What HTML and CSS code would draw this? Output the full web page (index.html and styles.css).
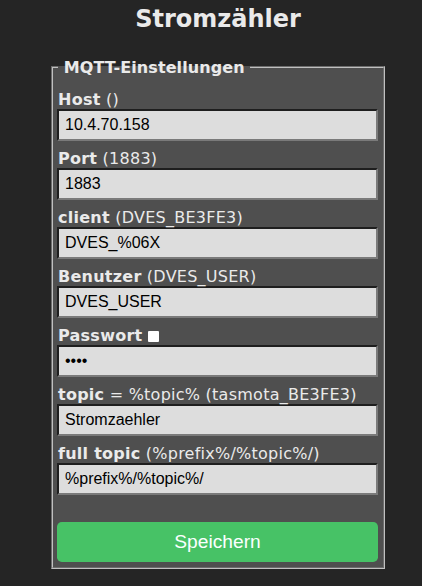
FILE: index.html
```html
<!DOCTYPE html>
<html lang="de">
<head>
<meta charset="utf-8">
<title>Stromzähler</title>
<link rel="stylesheet" href="styles.css">
</head>
<body>
<div class="page">
  <h2 class="title">Stromzähler</h2>
  <fieldset class="box">
    <legend class="legend">&nbsp;MQTT-Einstellungen&nbsp;</legend>
    <p class="field"><b>Host</b> ()<br><input class="inp" type="text" value="10.4.70.158"></p>
    <p class="field"><b>Port</b> (1883)<br><input class="inp" type="text" value="1883"></p>
    <p class="field"><b>client</b> (DVES_BE3FE3)<br><input class="inp" type="text" value="DVES_%06X"></p>
    <p class="field"><b>Benutzer</b> (DVES_USER)<br><input class="inp" type="text" value="DVES_USER"></p>
    <p class="field"><b>Passwort</b> <span class="check"></span><br><input class="inp" type="password" value="1234"></p>
    <p class="field"><b>topic</b> = %topic% (tasmota_BE3FE3)<br><input class="inp" type="text" value="Stromzaehler"></p>
    <p class="field"><b>full topic</b> (%prefix%/%topic%/)<br><input class="inp" type="text" value="%prefix%/%topic%/"></p>
    <button class="save" type="button">Speichern</button>
  </fieldset>
</div>
</body>
</html>
```
FILE: styles.css
```css
html, body {
  margin: 0;
  padding: 0;
  background: #252525;
}
body {
  font-family: "DejaVu Sans", Verdana, sans-serif;
  color: #eaeaea;
}
.page {
  width: 334px;
  margin-left: 51px;
}
.title {
  margin: 5px 0 0 0;
  font-size: 24px;
  line-height: 29px;
  font-weight: bold;
  text-align: center;
  color: #eaeaea;
}
.box {
  box-sizing: border-box;
  width: 334px;
  margin: 23.5px 0 0 0;
  padding: 5px 5px 5px 5px;
  border: 2px groove #c0c0c0;
  background: #4f4f4f;
  min-width: 0;
}
.legend {
  padding: 0;
  font-size: 16px;
  line-height: 19px;
  font-weight: bold;
  letter-spacing: 0.1px;
  color: #eaeaea;
}
.field {
  margin: 8px 0;
  font-size: 16px;
  line-height: 19px;
  letter-spacing: 0.25px;
}
.field b {
  font-weight: bold;
}
.check {
  display: inline-block;
  width: 11px;
  height: 11px;
  background: #ffffff;
  border-radius: 1px;
  vertical-align: -1px;
}
.inp {
  display: block;
  box-sizing: border-box;
  width: calc(100% + 1px);
  height: 32px;
  margin: 0 0 0 -1px;
  padding: 5px 5px 5px 6px;
  border-style: solid;
  border-width: 2px;
  border-color: #1e1e1e #7a7a7a #7a7a7a #1e1e1e;
  background: #dddddd;
  color: #000000;
  font-family: "Liberation Sans", Arial, sans-serif;
  font-size: 16px;
  line-height: 18px;
  letter-spacing: 0;
  outline: none;
}
.save {
  display: block;
  width: calc(100% + 1px);
  height: 40px;
  margin: 27px 0 0 -1px;
  padding: 0;
  border: 0;
  border-radius: 4.8px;
  background: #47c266;
  color: #faffff;
  font-family: "Liberation Sans", Arial, sans-serif;
  font-size: 19.2px;
  line-height: 40px;
  cursor: pointer;
}
```
